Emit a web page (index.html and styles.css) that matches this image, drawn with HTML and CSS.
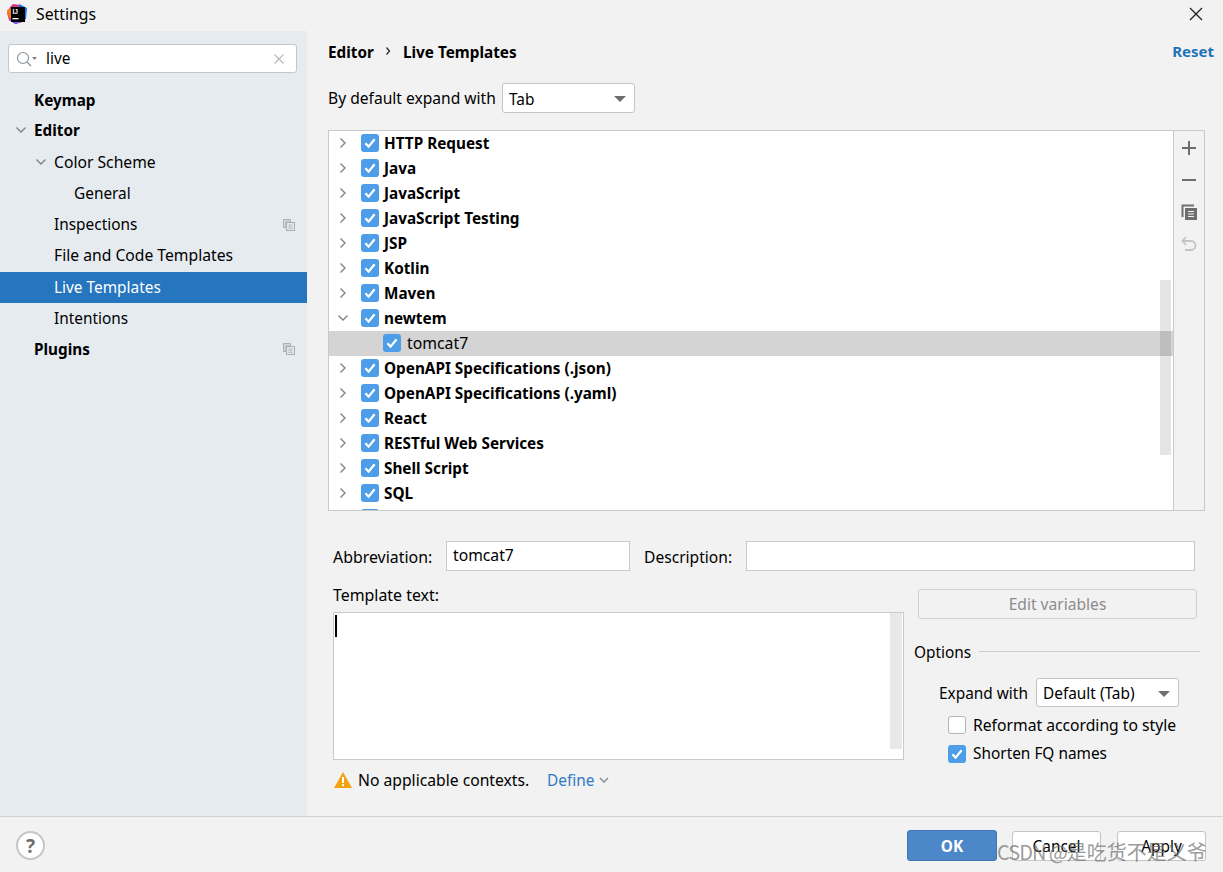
FILE: index.html
```html
<!DOCTYPE html>
<html lang="en">
<head>
<meta charset="utf-8">
<title>Settings</title>
<link rel="stylesheet" href="styles.css">
</head>
<body>
<svg class="defs" width="0" height="0" aria-hidden="true">
  <symbol id="chk" viewBox="0 0 18 18"><rect x="0" y="0" width="18" height="18" rx="3" fill="#4d9de8"/><path d="M4.4 9.2 7.600 12.600 13.600 5.200" fill="none" stroke="#fff" stroke-width="2.300"/></symbol>
  <symbol id="right" viewBox="0 0 12 12"><path d="M3.500 1.500 8 6 3.500 10.500" fill="none" stroke="#7f8386" stroke-width="1.400"/></symbol>
  <symbol id="down" viewBox="0 0 12 12"><path d="M1.500 3.500 6 8 10.500 3.500" fill="none" stroke="#7f8386" stroke-width="1.400"/></symbol>
  <symbol id="proj" viewBox="0 0 12 12"><path d="M.5.5h7v2.500h-4.500v5.500h-2.500z" fill="#d3d8dc" stroke="#a9b0b5"/><rect x="3.500" y="3.500" width="8" height="8" fill="#e3e7ea" stroke="#a9b0b5"/><path d="M5.500 6h4M5.500 7.700h4M5.500 9.400h4" stroke="#b7bdc2"/></symbol>
</svg>
<div class="app">
  <header class="titlebar">
    <svg class="logo" viewBox="0 0 20 20" width="20" height="20">
      <path d="M6 0 14 1 19 5 18 17 9 20 2 16 0 9 3 3z" fill="#e0337f"/>
      <path d="M0 6 5 4 6 14 2 14z" fill="#f97a12"/>
      <path d="M12 0 20 4 19 15 13 18z" fill="#087cfa"/>
      <path d="M2 16 9 14 15 18 8 20z" fill="#6b57ff"/>
      <rect x="4" y="3" width="14" height="15" fill="#000"/>
      <text class="logo-text" x="5.500" y="10">IJ</text>
      <rect x="5.500" y="14" width="6" height="1.300" fill="#fff"/>
    </svg>
    <span class="title">Settings</span>
    <svg class="close" viewBox="0 0 14 14" width="14" height="14"><path d="M1 1 13 13M13 1 1 13" stroke="#222" stroke-width="1.300" fill="none"/></svg>
  </header>
  <main class="main">
    <aside class="side">
      <div class="search">
        <svg class="search-icon" viewBox="0 0 22 16" width="22" height="16"><circle cx="7" cy="7" r="5.500" fill="none" stroke="#8f979c" stroke-width="1.200"/><path d="M11 11 15 15" stroke="#8f979c" stroke-width="1.400"/><path d="M16 6h5l-2.500 3z" fill="#7f8386"/></svg>
        <span class="search-text">live</span>
        <svg class="search-x" viewBox="0 0 10 10" width="10" height="10"><path d="M.5.500 9.500 9.500M9.500.500.500 9.500" stroke="#b4b8bb" stroke-width="1.100"/></svg>
      </div>
      <nav class="nav">
        <div class="nav-row lvl0 b">Keymap</div>
        <div class="nav-row lvl0 b up"><svg class="nav-arrow"><use href="#down"/></svg>Editor</div>
        <div class="nav-row lvl1 wide"><svg class="nav-arrow"><use href="#down"/></svg>Color Scheme</div>
        <div class="nav-row lvl2 down">General</div>
        <div class="nav-row lvl1">Inspections<svg class="nav-proj"><use href="#proj"/></svg></div>
        <div class="nav-row lvl1 wide up">File and Code Templates</div>
        <div class="nav-row lvl1 sel down">Live Templates</div>
        <div class="nav-row lvl1 down">Intentions</div>
        <div class="nav-row lvl0 b up">Plugins<svg class="nav-proj"><use href="#proj"/></svg></div>
      </nav>
    </aside>
    <section class="content">
      <div class="crumbs">
        <span class="b crumb-first">Editor</span>
        <svg class="crumb-sep" viewBox="0 0 6 8" width="6" height="8"><path d="M1.500.5 4.500 4 1.500 7.500" fill="none" stroke="#222" stroke-width="1.200"/></svg>
        <span class="b">Live Templates</span>
        <span class="reset">Reset</span>
      </div>
      <div class="expand-row">
        <span class="expand-label">By default expand with</span>
        <div class="select sel-tab">Tab<i class="caret"></i></div>
      </div>
      <div class="tree-box">
        <div class="tree">
          <div class="row"><svg class="arrow"><use href="#right"/></svg><svg class="cb"><use href="#chk"/></svg><span class="b">HTTP Request</span></div>
          <div class="row"><svg class="arrow"><use href="#right"/></svg><svg class="cb"><use href="#chk"/></svg><span class="b">Java</span></div>
          <div class="row"><svg class="arrow"><use href="#right"/></svg><svg class="cb"><use href="#chk"/></svg><span class="b">JavaScript</span></div>
          <div class="row"><svg class="arrow"><use href="#right"/></svg><svg class="cb"><use href="#chk"/></svg><span class="b">JavaScript Testing</span></div>
          <div class="row"><svg class="arrow"><use href="#right"/></svg><svg class="cb"><use href="#chk"/></svg><span class="b">JSP</span></div>
          <div class="row"><svg class="arrow"><use href="#right"/></svg><svg class="cb"><use href="#chk"/></svg><span class="b">Kotlin</span></div>
          <div class="row"><svg class="arrow"><use href="#right"/></svg><svg class="cb"><use href="#chk"/></svg><span class="b">Maven</span></div>
          <div class="row"><svg class="arrow"><use href="#down"/></svg><svg class="cb"><use href="#chk"/></svg><span class="b">newtem</span></div>
          <div class="row row-sel"><svg class="cb cb-child"><use href="#chk"/></svg><span class="child-label">tomcat7</span></div>
          <div class="row"><svg class="arrow"><use href="#right"/></svg><svg class="cb"><use href="#chk"/></svg><span class="b">OpenAPI Specifications (.json)</span></div>
          <div class="row"><svg class="arrow"><use href="#right"/></svg><svg class="cb"><use href="#chk"/></svg><span class="b">OpenAPI Specifications (.yaml)</span></div>
          <div class="row"><svg class="arrow"><use href="#right"/></svg><svg class="cb"><use href="#chk"/></svg><span class="b">React</span></div>
          <div class="row"><svg class="arrow"><use href="#right"/></svg><svg class="cb"><use href="#chk"/></svg><span class="b">RESTful Web Services</span></div>
          <div class="row"><svg class="arrow"><use href="#right"/></svg><svg class="cb"><use href="#chk"/></svg><span class="b">Shell Script</span></div>
          <div class="row"><svg class="arrow"><use href="#right"/></svg><svg class="cb"><use href="#chk"/></svg><span class="b">SQL</span></div>
          <div class="row"><svg class="arrow"><use href="#right"/></svg><svg class="cb"><use href="#chk"/></svg></div>
          <div class="tree-thumb"></div>
        </div>
        <div class="tools">
          <svg viewBox="-1 -1 16 16"><path d="M7 0v14M0 7h14" stroke="#6e6e6e" stroke-width="2"/></svg>
          <svg viewBox="-1 -1 16 16"><path d="M0 7h14" stroke="#6e6e6e" stroke-width="2"/></svg>
          <svg viewBox="0 0 16 16"><path d="M.5 13V.5H13V2.500H2.500V13z" fill="#6e6e6e"/><rect x="4" y="4" width="12" height="12" fill="#6e6e6e"/><path d="M7 7.500h6M7 10h6M7 12.500h6" stroke="#f2f2f2" stroke-width="1"/></svg>
          <svg viewBox="0 0 16 16"><path d="M5 1 1.500 5 5 9" fill="none" stroke="#c4c4c4" stroke-width="1.800"/><path d="M2 5h8a4.500 4.500 0 0 1 0 9H4" fill="none" stroke="#c4c4c4" stroke-width="1.800"/></svg>
        </div>
      </div>
      <div class="editor">
        <div class="abbr-row">
          <span class="abbr-label">Abbreviation:</span>
          <div class="input abbr-input">tomcat7</div>
          <span class="desc-label">Description:</span>
          <div class="input desc-input"></div>
        </div>
        <div class="lower">
          <div class="lower-left">
            <div class="tt-label">Template text:</div>
            <div class="textarea"><i class="cursor"></i><div class="ta-scroll"></div></div>
            <div class="context">
              <svg viewBox="0 0 18 16" width="18" height="16"><path d="M9 0 18 16H0z" fill="#f2a30f"/><path d="M8 5h2v6H8zM8 12h2v2H8z" fill="#fff"/></svg>
              <span class="ctx-text wide">No applicable contexts.</span>
              <span class="define">Define</span>
              <svg class="define-arrow" viewBox="0 0 10 6" width="10" height="6"><path d="M1 1 5 5 9 1" fill="none" stroke="#8b9094" stroke-width="1.500"/></svg>
            </div>
          </div>
          <div class="lower-right">
            <div class="btn-edit">Edit variables</div>
            <div class="options-head"><span>Options</span><i class="rule"></i></div>
            <div class="opt-expand"><span class="opt-label">Expand with</span><div class="select sel-default">Default (Tab)<i class="caret"></i></div></div>
            <div class="opt-check"><i class="box"></i><span class="wide">Reformat according to style</span></div>
            <div class="opt-check"><svg class="cb-opt"><use href="#chk"/></svg><span>Shorten FQ names</span></div>
          </div>
        </div>
      </div>
    </section>
  </main>
  <footer class="footer">
    <div class="help">?</div>
    <div class="btn btn-ok">OK</div>
    <div class="btn">Cancel</div>
    <div class="btn">Apply</div>
  </footer>
  <div class="watermark"><span class="wm-latin">CSDN @</span>是吃货不是义爷</div>
</div>
</body>
</html>
```
FILE: styles.css
```css
* { box-sizing: border-box; }
html, body { margin: 0; padding: 0; }
body { width: 1223px; height: 872px; overflow: hidden; background: #f2f2f2; color: #000; font: 15.400px/20px "Noto Sans", "Noto Sans CJK SC", sans-serif; }
.defs { position: absolute; }
.b { font-weight: 700; font-size: 15.300px; }
.wide { font-size: 15.700px; }
.app { position: relative; width: 1223px; height: 872px; display: flex; flex-direction: column; }
.titlebar { height: 31px; flex: none; display: flex; align-items: center; padding: 0 20px 3px 7px; }
.logo { flex: none; }
.logo-text { font: 700 6.500px "Liberation Sans", sans-serif; fill: #fff; }
.title { margin-left: 9px; font-size: 15.800px; }
.close { margin-left: auto; }
.main { flex: 1; min-height: 0; display: flex; }
.side { width: 307px; flex: none; background: #e6ebf0; padding-top: 13px; }
.search { margin-left: 8px; width: 289px; height: 29px; border: 1px solid #c4c7ca; border-radius: 3px; background: #fff; display: flex; align-items: center; padding: 0 12px 0 7px; }
.search-text { margin-left: 8px; }
.search-x { margin-left: auto; }
.nav { margin-top: 11px; }
.nav-row { height: 31.250px; display: flex; align-items: center; position: relative; padding-right: 12px; }
.nav-row.up { padding-bottom: 2px; }
.nav-row.down { padding-top: 2px; }
.lvl0 { padding-left: 34px; }
.lvl1 { padding-left: 54px; }
.lvl2 { padding-left: 74px; }
.nav-arrow { position: absolute; width: 12px; height: 12px; }
.lvl0 .nav-arrow { left: 15px; }
.lvl1 .nav-arrow { left: 35px; }
.nav-proj { width: 12px; height: 12px; margin-left: auto; }
.sel { background: #2675bf; color: #fff; }
.content { flex: 1; min-width: 0; padding: 0 10px 0 21px; display: flex; flex-direction: column; }
.crumbs { height: 20px; margin-top: 11px; display: flex; align-items: center; }
.crumb-first { width: 57px; }
.crumb-sep { width: 6px; height: 8px; margin-right: 12px; margin-bottom: 3px; }
.reset { margin-left: auto; margin-right: -1px; margin-bottom: 3px; color: #1f74b8; font-weight: 700; font-size: 15px; }
.expand-row { margin-top: 21px; height: 30px; display: flex; align-items: center; }
.expand-label { width: 174px; font-size: 15.600px; }
.select { position: relative; height: 30px; background: #fff; border: 1px solid #c4c4c4; border-radius: 3px; display: flex; align-items: center; padding: 2px 0 0 6px; }
.sel-tab { width: 133px; padding-top: 3px; }
.sel-default { width: 143px; height: 29px; }
.caret { position: absolute; right: 8px; top: 12px; border: 6px solid transparent; border-top: 6px solid #6e6e6e; border-bottom: 0; }
.tree-box { margin-top: 17px; height: 381px; width: 877px; border: 1px solid #c9c9c9; display: flex; background: #fff; }
.tree { flex: 1; min-width: 0; position: relative; overflow: hidden; }
.row { height: 25px; display: flex; align-items: center; position: relative; padding: 0 0 2px 8px; }
.arrow { width: 12px; height: 12px; flex: none; }
.cb { width: 18px; height: 18px; flex: none; margin-left: 12px; margin-right: 5px; }
.cb-child { margin-left: 46px; margin-right: 6px; }
.child-label { font-size: 15.800px; }
.row-sel { background: #d4d4d4; }
.tree-thumb { position: absolute; right: 2px; top: 149px; width: 11px; height: 175px; background: rgba(0,0,0,.1); }
.tools { width: 31px; flex: none; border-left: 1px solid #c9c9c9; background: #f2f2f2; display: flex; flex-direction: column; align-items: center; padding-top: 9px; gap: 16px; }
.tools svg { width: 16px; height: 16px; }
.editor { padding: 30px 0 0 5px; }
.abbr-row { display: flex; align-items: center; height: 30px; }
.abbr-label { width: 113px; font-size: 15.900px; padding-top: 2px; }
.input { height: 30px; border: 1px solid #c9c9c9; background: #fff; padding: 3px 6px; }
.abbr-input { width: 184px; font-size: 15.700px; }
.desc-label { margin-left: 14px; width: 102px; font-size: 15.600px; padding-top: 2px; }
.desc-input { width: 449px; }
.lower { display: flex; }
.lower-left { width: 571px; }
.tt-label { margin-top: 14px; height: 20px; font-size: 15.900px; }
.textarea { position: relative; height: 148px; margin-top: 7px; border: 1px solid #c9c9c9; background: #fff; padding: 2px 1px; }
.cursor { display: block; width: 2px; height: 22px; background: #000; }
.ta-scroll { position: absolute; right: 1px; top: 0; bottom: 10px; width: 12px; background: #e8e8e8; }
.context { margin-top: 10px; display: flex; align-items: center; height: 20px; padding-left: 1px; }
.ctx-text { margin-left: 6px; width: 172px; white-space: nowrap; }
.define { margin-left: 17px; padding-top: 1px; color: #2f7ac0; }
.define-arrow { margin-left: 5px; }
.lower-right { width: 286px; margin-left: 10px; }
.btn-edit { margin: 18px 3px 0 4px; height: 30px; border: 1px solid #d0d0d0; border-radius: 3px; display: flex; align-items: center; justify-content: center; color: #8c8c8c; font-size: 15.600px; }
.options-head { margin-top: 24px; display: flex; align-items: center; height: 20px; gap: 8px; }
.rule { flex: 1; height: 1px; background: #cfcfcf; margin-bottom: 4px; }
.opt-expand { margin: 15px 0 0 25px; display: flex; align-items: center; }
.opt-label { width: 97px; padding-top: 2px; }
.opt-check { margin-left: 34px; display: flex; align-items: center; gap: 7px; height: 28px; }
.opt-expand + .opt-check { margin-top: 4px; }
.opt-check + .opt-check { margin-top: 1px; }
.box { width: 18px; height: 18px; background: #fff; border: 1px solid #b4b4b4; border-radius: 3px; flex: none; }
.cb-opt { width: 18px; height: 18px; flex: none; }
.footer { height: 56px; flex: none; border-top: 1px solid #d1d1d1; display: flex; align-items: center; padding: 2px 17px 0 16px; gap: 15px; }
.help { width: 29px; height: 29px; border: 2px solid #c6c6c6; border-radius: 50%; background: #fff; display: flex; align-items: center; justify-content: center; color: #6e6e6e; font-size: 19px; font-weight: 700; margin-right: auto; }
.btn { width: 89px; height: 30px; background: #fff; border: 1px solid #c4c4c4; border-radius: 3px; display: flex; align-items: center; justify-content: center; padding-top: 2px; }
.btn-ok { width: 90px; height: 31px; background: #4b87c9; border-color: #3d77b8; color: #fff; font-weight: 700; }
.btn + .btn + .btn { margin-left: 1px; }
.watermark { position: absolute; left: 997px; top: 840px; font: 20px/24px "Noto Sans CJK SC", sans-serif; white-space: nowrap; color: rgba(110,110,110,.7); }
.wm-latin { letter-spacing: -1px; }
```
